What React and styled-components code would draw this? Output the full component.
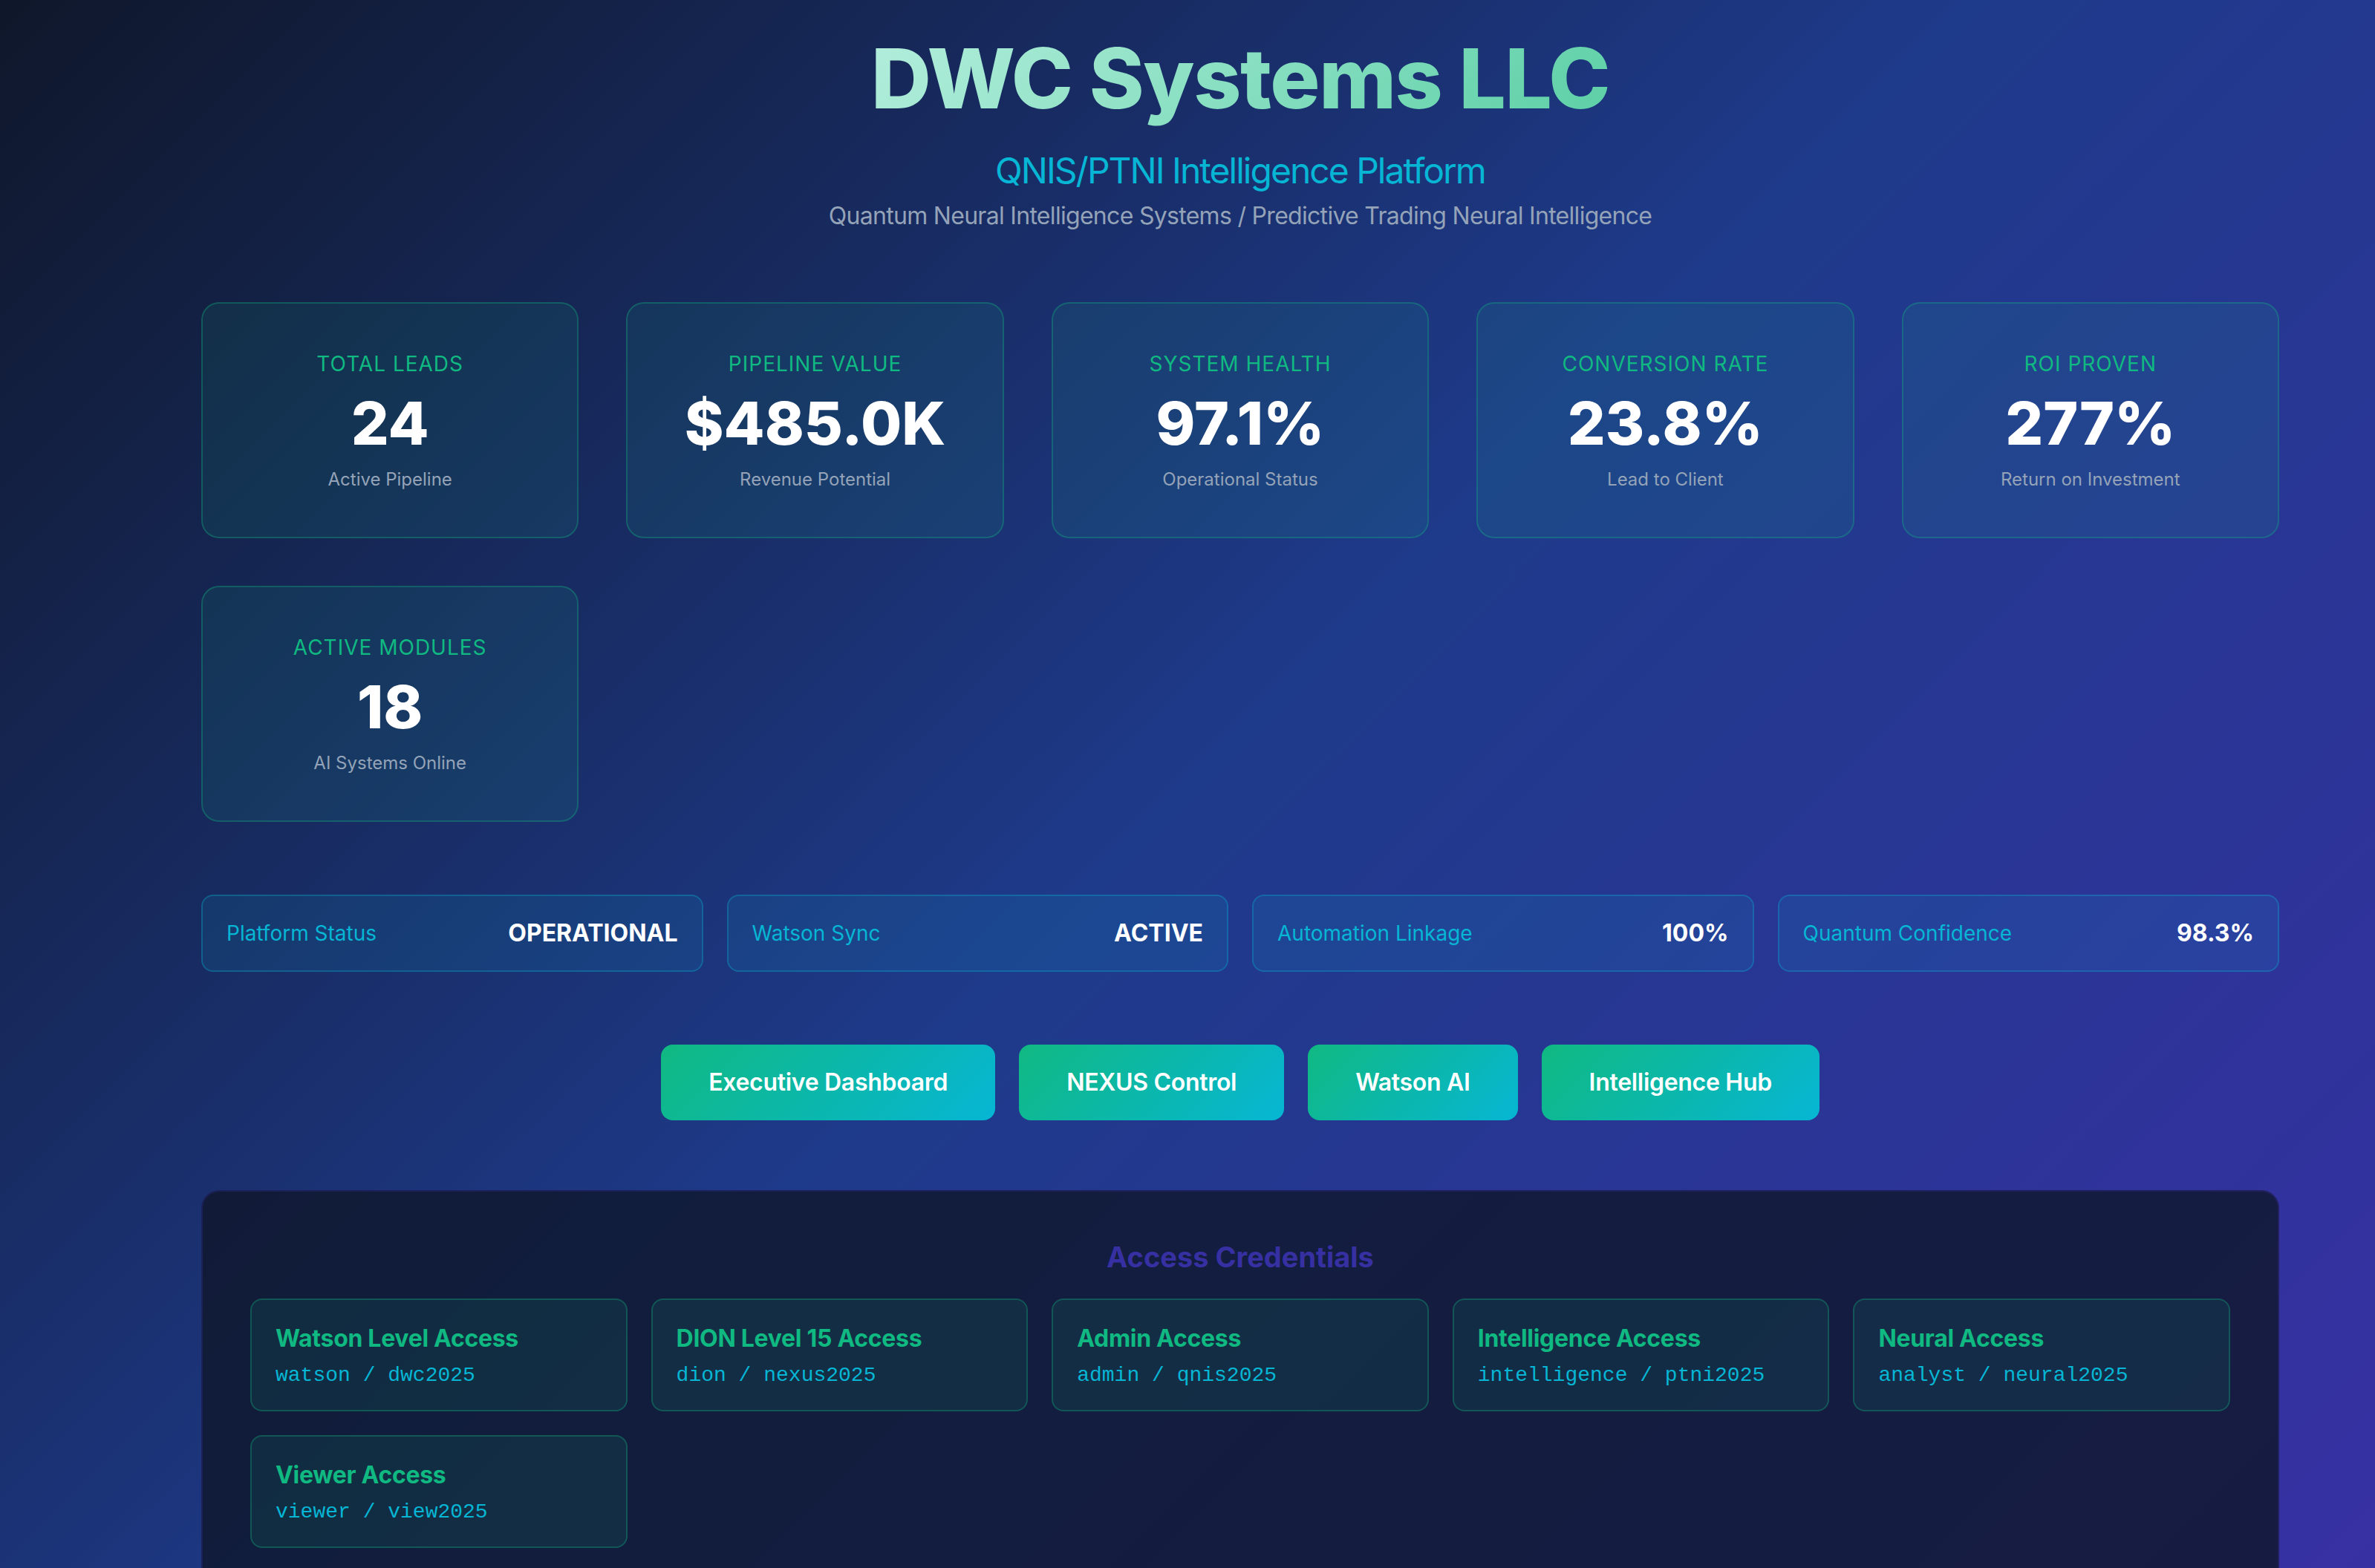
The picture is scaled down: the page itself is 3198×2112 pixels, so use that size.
import React from "react";
import styled, { createGlobalStyle } from "styled-components";

const GlobalStyle = createGlobalStyle`
  html, body {
    margin: 0;
    padding: 0;
  }
  * {
    box-sizing: border-box;
  }
`;

const Page = styled.div`
  height: 100vh;
  overflow: hidden;
  padding: 37px 129px 0 271px;
  background: linear-gradient(135deg, #0f172a 0%, #1e3a8a 50%, #3730a3 100%);
  font-family: Inter, "Noto Sans", sans-serif;
  color: #fff;
`;

const Header = styled.header`
  text-align: center;
  margin-bottom: 96px;
`;

const Title = styled.h1`
  display: inline-block;
  margin: 0;
  font-size: 112px;
  line-height: 136px;
  font-weight: 800;
  letter-spacing: -1.4px;
  background: linear-gradient(135deg, #b3eedc 0%, #5ccfa6 100%);
  -webkit-background-clip: text;
  background-clip: text;
  color: transparent;
`;

const Subtitle = styled.h2`
  margin: 28px 0 0;
  font-size: 48px;
  line-height: 58px;
  font-weight: 400;
  letter-spacing: -2px;
  color: #06b6d4;
`;

const Tagline = styled.p`
  margin: 12px 0 0;
  font-size: 32px;
  line-height: 40px;
  letter-spacing: -0.7px;
  color: #94a3b8;
`;

const StatGrid = styled.section`
  display: grid;
  grid-template-columns: repeat(5, 1fr);
  gap: 64px;
  margin-bottom: 98px;
`;

const StatCard = styled.div`
  padding: 63px 32px 61px;
  border: 2px solid rgba(16, 185, 129, 0.3);
  border-radius: 24px;
  background: rgba(16, 185, 129, 0.1);
  text-align: center;
`;

const StatLabel = styled.div`
  font-size: 28px;
  line-height: 36px;
  letter-spacing: 1px;
  text-transform: uppercase;
  color: #10b981;
`;

const StatValue = styled.div`
  margin-top: 14px;
  font-size: 80px;
  line-height: 96px;
  font-weight: 800;
  color: #fff;
`;

const StatNote = styled.div`
  margin-top: 12px;
  font-size: 24px;
  line-height: 32px;
  color: #94a3b8;
`;

const StatusGrid = styled.section`
  display: grid;
  grid-template-columns: repeat(4, 1fr);
  gap: 32px;
  margin-bottom: 98px;
`;

const StatusItem = styled.div`
  display: flex;
  align-items: center;
  justify-content: space-between;
  padding: 30px 32px;
  border: 2px solid rgba(6, 182, 212, 0.3);
  border-radius: 16px;
  background: rgba(6, 182, 212, 0.1);
`;

const StatusLabel = styled.span`
  font-size: 28px;
  line-height: 36px;
  color: #06b6d4;
`;

const StatusValue = styled.span`
  font-size: 32px;
  line-height: 40px;
  font-weight: 700;
  color: #fff;
`;

const Actions = styled.nav`
  display: flex;
  justify-content: center;
  gap: 32px;
  margin-bottom: 94px;
`;

const ActionButton = styled.a`
  padding: 31px 64px;
  border-radius: 16px;
  background: linear-gradient(135deg, #10b981 0%, #06b6d4 100%);
  color: #fff;
  font-size: 32px;
  line-height: 40px;
  font-weight: 600;
  letter-spacing: -0.3px;
  text-decoration: none;
`;

const CredPanel = styled.section`
  padding: 64px;
  border: 2px solid rgba(55, 48, 163, 0.3);
  border-radius: 24px;
  background: rgba(15, 23, 42, 0.8);
`;

const CredHeading = styled.h3`
  margin: 0 0 32px;
  text-align: center;
  font-size: 38px;
  line-height: 48px;
  font-weight: 700;
  color: #3730a3;
`;

const CredGrid = styled.div`
  display: grid;
  grid-template-columns: repeat(5, 1fr);
  gap: 32px;
`;

const CredCard = styled.div`
  padding: 32px 32px 28px;
  border: 2px solid rgba(16, 185, 129, 0.3);
  border-radius: 16px;
  background: rgba(16, 185, 129, 0.1);
`;

const CredTitle = styled.div`
  font-size: 32px;
  line-height: 40px;
  font-weight: 700;
  letter-spacing: -0.3px;
  color: #10b981;
`;

const CredLogin = styled.div`
  margin-top: 12px;
  font-family: "Liberation Mono", "Courier New", monospace;
  font-size: 28px;
  line-height: 36px;
  color: #06b6d4;
`;

const stats = [
  { label: "Total Leads", value: "24", note: "Active Pipeline" },
  { label: "Pipeline Value", value: "$485.0K", note: "Revenue Potential" },
  { label: "System Health", value: "97.1%", note: "Operational Status" },
  { label: "Conversion Rate", value: "23.8%", note: "Lead to Client" },
  { label: "ROI Proven", value: "277%", note: "Return on Investment" },
  { label: "Active Modules", value: "18", note: "AI Systems Online" },
];

const statuses = [
  { label: "Platform Status", value: "OPERATIONAL" },
  { label: "Watson Sync", value: "ACTIVE" },
  { label: "Automation Linkage", value: "100%" },
  { label: "Quantum Confidence", value: "98.3%" },
];

const actions = ["Executive Dashboard", "NEXUS Control", "Watson AI", "Intelligence Hub"];

const credentials = [
  { title: "Watson Level Access", user: "watson", pass: "dwc2025" },
  { title: "DION Level 15 Access", user: "dion", pass: "nexus2025" },
  { title: "Admin Access", user: "admin", pass: "qnis2025" },
  { title: "Intelligence Access", user: "intelligence", pass: "ptni2025" },
  { title: "Neural Access", user: "analyst", pass: "neural2025" },
  { title: "Viewer Access", user: "viewer", pass: "view2025" },
];

export default function App() {
  return (
    <Page>
      <GlobalStyle />
      <Header>
        <Title>DWC Systems LLC</Title>
        <Subtitle>QNIS/PTNI Intelligence Platform</Subtitle>
        <Tagline>Quantum Neural Intelligence Systems / Predictive Trading Neural Intelligence</Tagline>
      </Header>

      <StatGrid>
        {stats.map((s) => (
          <StatCard key={s.label}>
            <StatLabel>{s.label}</StatLabel>
            <StatValue>{s.value}</StatValue>
            <StatNote>{s.note}</StatNote>
          </StatCard>
        ))}
      </StatGrid>

      <StatusGrid>
        {statuses.map((s) => (
          <StatusItem key={s.label}>
            <StatusLabel>{s.label}</StatusLabel>
            <StatusValue>{s.value}</StatusValue>
          </StatusItem>
        ))}
      </StatusGrid>

      <Actions>
        {actions.map((a) => (
          <ActionButton key={a} href="#">{a}</ActionButton>
        ))}
      </Actions>

      <CredPanel>
        <CredHeading>Access Credentials</CredHeading>
        <CredGrid>
          {credentials.map((c) => (
            <CredCard key={c.title}>
              <CredTitle>{c.title}</CredTitle>
              <CredLogin>{c.user} / {c.pass}</CredLogin>
            </CredCard>
          ))}
        </CredGrid>
      </CredPanel>
    </Page>
  );
}
